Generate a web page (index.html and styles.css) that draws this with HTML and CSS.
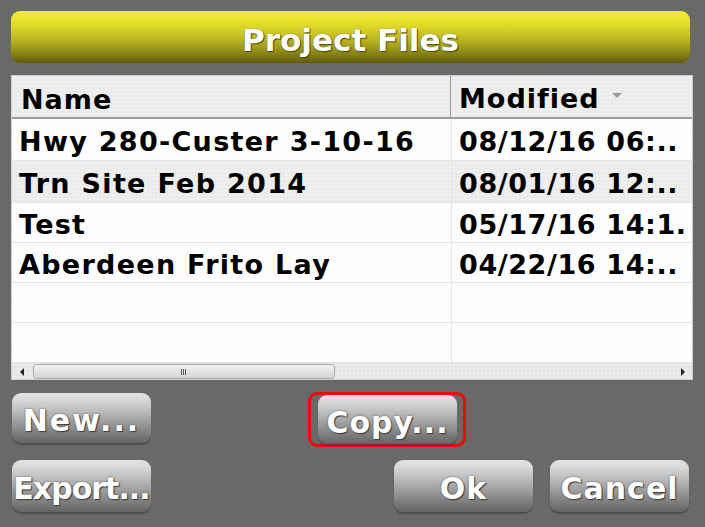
FILE: index.html
```html
<!DOCTYPE html>
<html>
<head>
<meta charset="utf-8">
<link rel="stylesheet" href="styles.css">
</head>
<body>
<div class="screen">
  <div class="titlebar">Project Files</div>
  <div class="table">
    <div class="thead">
      <div class="th th-name">Name</div>
      <div class="th th-mod">Modified<span class="sort"></span></div>
    </div>
    <div class="tbody">
      <div class="row r1"><div class="cell c1">Hwy 280-Custer 3-10-16</div><div class="cell c2">08/12/16 06:..</div></div>
      <div class="row r2 alt"><div class="cell c1">Trn Site Feb 2014</div><div class="cell c2">08/01/16 12:..</div></div>
      <div class="row"><div class="cell c1">Test</div><div class="cell c2">05/17/16 14:1.</div></div>
      <div class="row"><div class="cell c1">Aberdeen Frito Lay</div><div class="cell c2">04/22/16 14:..</div></div>
      <div class="row"><div class="cell c1"></div><div class="cell c2"></div></div>
      <div class="row"><div class="cell c1"></div><div class="cell c2"></div></div>
    </div>
    <div class="hscroll">
      <span class="arrow arrow-left"></span>
      <div class="thumb"><span class="grip"></span></div>
      <div class="track"></div>
      <span class="arrow arrow-right"></span>
    </div>
  </div>
  <div class="actions">
    <div class="btn-row top">
      <button class="btn btn-new">New...</button>
      <div class="focus-ring"><button class="btn btn-copy">Copy...</button></div>
    </div>
    <div class="btn-row bottom">
      <button class="btn btn-export">Export...</button>
      <button class="btn btn-ok">Ok</button>
      <button class="btn btn-cancel">Cancel</button>
    </div>
  </div>
</div>
</body>
</html>
```
FILE: styles.css
```css
html, body {
  margin: 0;
  padding: 0;
}
body {
  width: 705px;
  height: 527px;
  overflow: hidden;
  background-color: #686868;
  background-image: radial-gradient(rgba(255,255,255,0.07) 0.8px, transparent 1px);
  background-size: 3px 3px;
  font-family: "DejaVu Sans", "Verdana", sans-serif;
  font-weight: bold;
}
.screen {
  display: flex;
  flex-direction: column;
  padding: 11px 12px 0 11px;
}
.titlebar {
  height: 52px;
  margin-right: 3px;
  border-radius: 9px;
  background: linear-gradient(#f0ea2e 0%, #eae42c 16%, #d8d226 34%, #bcb820 54%, #9c981a 72%, #7a7614 88%, #605c10 100%);
  color: #fff;
  font-size: 31px;
  text-align: center;
  line-height: 52px;
  padding-top: 3px;
  box-sizing: border-box;
  text-shadow: 1px 1px 1px #4a4808, 0 0 1px #555;
}
.table {
  margin-top: 12px;
  height: 305px;
  box-sizing: border-box;
  border: 1px solid #cfcfcf;
  background: #fdfefd;
  display: flex;
  flex-direction: column;
  overflow: hidden;
}
.thead {
  display: grid;
  grid-template-columns: 439px 1fr;
  height: 43px;
  box-sizing: border-box;
  border-bottom: 2px solid #9c9c9c;
  background-color: #ebebeb;
  background-image: radial-gradient(rgba(255,255,255,0.8) 0.6px, transparent 0.8px);
  background-size: 4px 4px;
  flex: none;
}
.th {
  font-size: 27px;
  color: #000;
  line-height: 41px;
  padding-top: 3px;
  white-space: nowrap;
  overflow: hidden;
  letter-spacing: 1px;
}
.th-name {
  padding-left: 9px;
  border-right: 1px solid #9c9c9c;
}
.th-mod {
  padding-left: 8px;
  display: flex;
  align-items: center;
}
.sort {
  display: inline-block;
  width: 0;
  height: 0;
  margin-left: 12px;
  margin-top: -6px;
  border-left: 5px solid transparent;
  border-right: 5px solid transparent;
  border-top: 5px solid #9a9a9a;
}
.tbody {
  height: 243px;
  overflow: hidden;
  flex: none;
}
.row {
  display: grid;
  grid-template-columns: 440px 1fr;
  height: 40px;
  box-sizing: border-box;
  border-bottom: 1px solid #e4e4e4;
}
.row.r1, .row.r2 {
  height: 42px;
}
.row.alt {
  background-color: #ebebeb;
  background-image: radial-gradient(rgba(255,255,255,0.8) 0.6px, transparent 0.8px);
  background-size: 4px 4px;
}
.cell {
  font-size: 27px;
  color: #000;
  white-space: nowrap;
  overflow: hidden;
  display: flex;
  align-items: center;
  padding-top: 4px;
  letter-spacing: 1.3px;
}
.c1 {
  padding-left: 7px;
  border-right: 1px solid #e6e6e6;
}
.c2 {
  padding-left: 7px;
  letter-spacing: 0.6px;
}
.hscroll {
  height: 17px;
  flex: none;
  display: flex;
  align-items: center;
  background-color: #e6e6e6;
  background-image: radial-gradient(rgba(255,255,255,0.9) 0.6px, transparent 0.8px);
  background-size: 4px 4px;
  border-top: 1px solid #e0e0e0;
}
.arrow {
  width: 0;
  height: 0;
  border-top: 4px solid transparent;
  border-bottom: 4px solid transparent;
  flex: none;
}
.arrow-left {
  margin-left: 8px;
  margin-right: 9px;
  border-right: 4px solid #222;
}
.arrow-right {
  margin-left: 8px;
  margin-right: 7px;
  border-left: 4px solid #222;
}
.thumb {
  width: 302px;
  height: 15px;
  box-sizing: border-box;
  border: 1px solid #a9a9a9;
  border-radius: 3px;
  background: linear-gradient(#f4f4f4, #e2e2e2 50%, #d6d6d6);
  display: flex;
  align-items: center;
  justify-content: center;
  flex: none;
}
.grip {
  width: 6px;
  height: 6px;
  background: repeating-linear-gradient(90deg, #555 0 1px, transparent 1px 2px);
}
.track {
  flex: 1;
}
.actions {
  display: flex;
  flex-direction: column;
}
.btn-row {
  display: flex;
  align-items: flex-start;
}
.btn-row.top {
  margin-top: 12px;
}
.btn-row.bottom {
  margin-top: 13px;
}
.btn {
  width: 139px;
  height: 50px;
  border: none;
  border-radius: 9px;
  padding: 5px 0 0 0;
  margin: 0;
  font-family: "DejaVu Sans", "Verdana", sans-serif;
  font-weight: bold;
  font-size: 30px;
  letter-spacing: 1px;
  color: #fff;
  text-align: center;
  white-space: nowrap;
  background: linear-gradient(#e4e4e4 0%, #d8d8d8 14%, #c4c4c4 30%, #acacac 48%, #939393 66%, #7c7c7c 82%, #646464 100%);
  text-shadow: 1px 1px 1px #3a3a3a, 0 0 2px #555;
  box-shadow: 0 2px 1px rgba(60,60,60,0.6);
}
.btn-new {
  margin-left: 1px;
  margin-top: 1px;
  letter-spacing: 2px;
}
.focus-ring {
  margin-left: 157px;
  border: 3px solid #ee0a0a;
  border-radius: 9px;
  padding: 0 6px 0 7px;
  display: flex;
}
.btn-copy {
  height: 49px;
}
.bottom .btn {
  height: 52px;
}
.btn-export {
  margin-left: 1px;
  letter-spacing: -1px;
}
.btn-ok {
  margin-left: auto;
}
.btn-cancel {
  margin-left: 17px;
  margin-right: 4px;
}
```
